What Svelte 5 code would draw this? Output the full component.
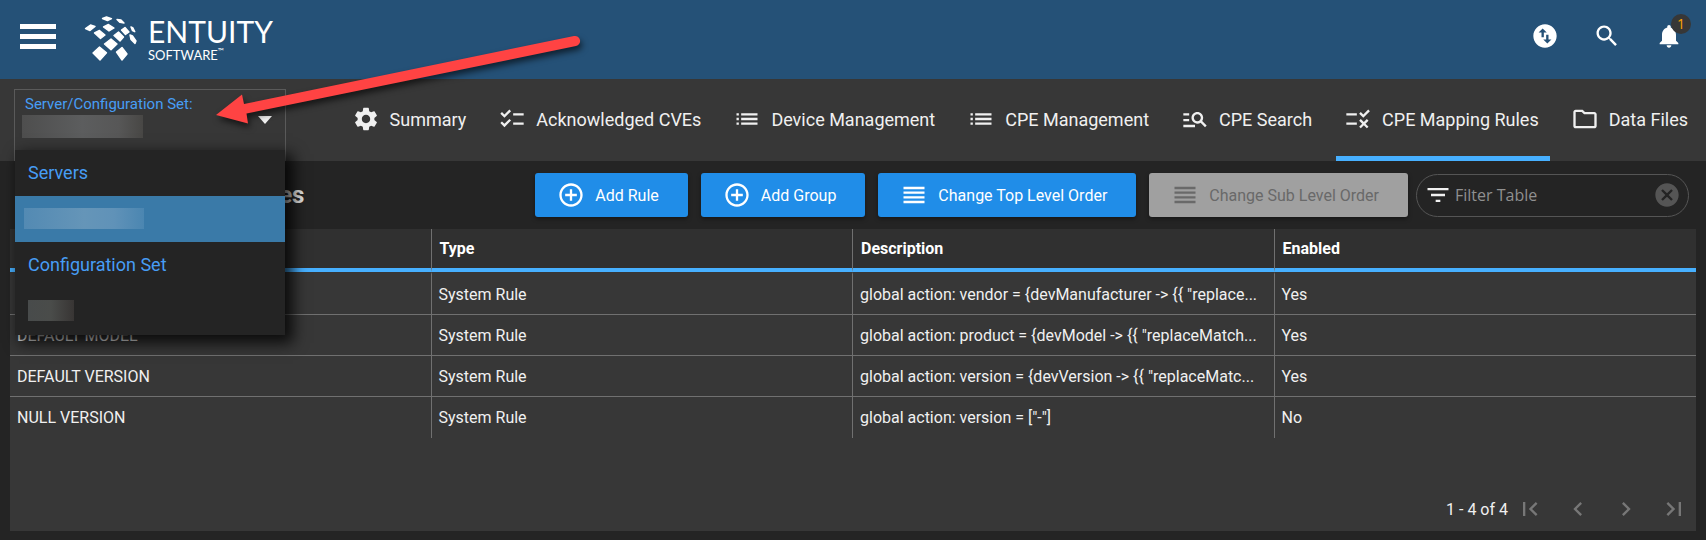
<script>
  const icons = {
    settings: 'M19.14 12.94c.04-.3.06-.61.06-.94 0-.32-.02-.64-.07-.94l2.03-1.58c.18-.14.23-.41.12-.61l-1.92-3.32c-.12-.22-.37-.29-.59-.22l-2.39.96c-.5-.38-1.03-.7-1.62-.94l-.36-2.54c-.04-.24-.24-.41-.48-.41h-3.84c-.24 0-.43.17-.47.41l-.36 2.54c-.59.24-1.13.57-1.62.94l-2.39-.96c-.22-.08-.47 0-.59.22L2.74 8.87c-.12.21-.08.47.12.61l2.03 1.58c-.05.3-.09.63-.09.94s.02.64.07.94l-2.03 1.58c-.18.14-.23.41-.12.61l1.92 3.32c.12.22.37.29.59.22l2.39-.96c.5.38 1.03.7 1.62.94l.36 2.54c.05.24.24.41.48.41h3.84c.24 0 .44-.17.47-.41l.36-2.54c.59-.24 1.13-.56 1.62-.94l2.39.96c.22.08.47 0 .59-.22l1.92-3.32c.12-.22.07-.47-.12-.61l-2.01-1.58zM12 15.6c-1.98 0-3.6-1.62-3.6-3.6s1.62-3.6 3.6-3.6 3.6 1.62 3.6 3.6-1.62 3.6-3.6 3.6z',
    checklist: 'M22 7h-9v2h9V7zm0 8h-9v2h9v-2zM5.54 11L2 7.46l1.41-1.41 2.12 2.12 4.24-4.24 1.41 1.41L5.54 11zm0 8L2 15.46l1.41-1.41 2.12 2.12 4.24-4.24 1.41 1.41L5.54 19z',
    list: 'M3 13h2v-2H3v2zm0 4h2v-2H3v2zm0-8h2V7H3v2zm4 4h14v-2H7v2zm0 4h14v-2H7v2zM7 7v2h14V7H7z',
    manageSearch: 'M7 9H2V7h5v2zm0 3H2v2h5v-2zm13.59 7l-3.83-3.83c-.8.52-1.74.83-2.76.83-2.76 0-5-2.24-5-5s2.24-5 5-5 5 2.24 5 5c0 1.02-.31 1.96-.83 2.75L22 17.59 20.59 19zM17 11c0-1.65-1.35-3-3-3s-3 1.35-3 3 1.35 3 3 3 3-1.35 3-3zM2 19h10v-2H2v2z',
    rule: 'M16.54 11L13 7.46l1.41-1.41 2.12 2.12 4.24-4.24 1.41 1.41L16.54 11zM11 7H2v2h9V7zm10 6.41L19.59 12 17 14.59 14.41 12 13 13.41 15.59 16 13 18.59 14.41 20 17 17.41 19.59 20 21 18.59 18.41 16 21 13.41zM11 15H2v2h9v-2z',
    folder: 'M9.17 6l2 2H20v10H4V6h5.17M10 4H4c-1.1 0-1.99.9-1.99 2L2 18c0 1.1.9 2 2 2h16c1.1 0 2-.9 2-2V8c0-1.1-.9-2-2-2h-8l-2-2z',
    add: 'M13 7h-2v4H7v2h4v4h2v-4h4v-2h-4V7zm-1-5C6.48 2 2 6.48 2 12s4.48 10 10 10 10-4.48 10-10S17.52 2 12 2zm0 18c-4.41 0-8-3.59-8-8s3.59-8 8-8 8 3.59 8 8-3.59 8-8 8z',
    reorder: 'M3 15h18v-2H3v2zm0 4h18v-2H3v2zm0-8h18V9H3v2zm0-6v2h18V5H3z',
    filter: 'M10 18h4v-2h-4v2zM3 6v2h18V6H3zm3 7h12v-2H6v2z',
    cancel: 'M12 2C6.47 2 2 6.47 2 12s4.47 10 10 10 10-4.47 10-10S17.53 2 12 2zm5 13.59L15.59 17 12 13.41 8.41 17 7 15.59 10.59 12 7 8.41 8.41 7 12 10.59 15.59 7 17 8.41 13.41 12 17 15.59z',
    swap: 'M12 2C6.48 2 2 6.48 2 12s4.48 10 10 10 10-4.48 10-10S17.52 2 12 2zM6.5 9L10 5.5 13.5 9H11v4H9V9H6.5zm11 6L14 18.5 10.5 15H13v-4h2v4h2.5z',
    search: 'M15.5 14h-.79l-.28-.27C15.41 12.59 16 11.11 16 9.5 16 5.91 13.09 3 9.5 3S3 5.91 3 9.5 5.91 16 9.5 16c1.61 0 3.09-.59 4.23-1.57l.27.28v.79l5 4.99L20.49 19l-4.99-5zm-6 0C7.01 14 5 11.99 5 9.5S7.01 5 9.5 5 14 7.01 14 9.5 11.99 14 9.5 14z',
    bell: 'M12 22c1.1 0 2-.9 2-2h-4c0 1.1.89 2 2 2zm6-6v-5c0-3.07-1.64-5.64-4.5-6.32V4c0-.83-.67-1.5-1.5-1.5s-1.5.67-1.5 1.5v.68C7.63 5.36 6 7.92 6 11v5l-2 2v1h16v-1l-2-2z',
    first: 'M18.41 16.59L13.82 12l4.59-4.59L17 6l-6 6 6 6zM6 6h2v12H6z',
    prev: 'M15.41 7.41L14 6l-6 6 6 6 1.41-1.41L10.83 12z',
    next: 'M10 6L8.59 7.41 13.17 12l-4.58 4.59L10 18l6-6z',
    last: 'M5.59 7.41L10.18 12l-4.59 4.59L7 18l6-6-6-6zM16 6h2v12h-2z'
  };

  const tabs = [
    { label: 'Summary', icon: 'settings' },
    { label: 'Acknowledged CVEs', icon: 'checklist' },
    { label: 'Device Management', icon: 'list' },
    { label: 'CPE Management', icon: 'list' },
    { label: 'CPE Search', icon: 'manageSearch' },
    { label: 'CPE Mapping Rules', icon: 'rule' },
    { label: 'Data Files', icon: 'folder' }
  ];

  const actions = [
    { label: 'Add Rule', icon: 'add' },
    { label: 'Add Group', icon: 'add' },
    { label: 'Change Top Level Order', icon: 'reorder' },
    { label: 'Change Sub Level Order', icon: 'reorder', disabled: true }
  ];

  const columns = ['', 'Type', 'Description', 'Enabled'];

  const rules = [
    ['', 'System Rule', 'global action: vendor = {devManufacturer -> {{ "replace...', 'Yes'],
    ['DEFAULT MODEL', 'System Rule', 'global action: product = {devModel -> {{ "replaceMatch...', 'Yes'],
    ['DEFAULT VERSION', 'System Rule', 'global action: version = {devVersion -> {{ "replaceMatc...', 'Yes'],
    ['NULL VERSION', 'System Rule', 'global action: version = ["-"]', 'No']
  ];

  let activeTab = $state('CPE Mapping Rules');
  let menuOpen = $state(true);
  let filterText = $state('');

  let visibleRules = $derived(
    rules.filter((r) => r.join(' ').toLowerCase().includes(filterText.toLowerCase()))
  );
</script>

{#snippet icon(name)}
  <svg class="icon" viewBox="0 0 24 24" aria-hidden="true"><path d={icons[name]} /></svg>
{/snippet}

<div class="page">
  <header class="topbar">
    <button class="burger" aria-label="Menu">
      <span></span><span></span><span></span>
    </button>
    <a class="brand" href="#home">
      <svg class="brand-mark" viewBox="0 0 54 48" aria-hidden="true">
        <g stroke-linejoin="round" stroke-width="1.4">
          <path d="M18.5 3.5 22.5 2l5 1.600-4 2z" />
          <path d="M33 4.500l4 .5 3 3-4-.6z" />
          <path d="M1.500 13.500l5-3.500 4.500 1.500-5 4z" />
          <path d="M19.500 12l5-2.500 5.500 3.500-5 3z" />
          <path d="M10.500 18l5-2.500 5.500 4.500-4.500 3.500z" />
          <path d="M37.500 15l3.500-2.500 4 4.500-3.500 2.500z" />
          <path d="M30 20.500l4.500-3.500 5 5-3.500 4z" />
          <path d="M47 12l2 1 1.800 3.700-2.300-1z" />
          <path d="M46 20l2.500 1 3.500 5-1 2.500-4-4z" />
          <path d="M20.500 29l6.500-5 6 5-6 5.800z" />
          <path d="M9 38l6.500-6 7 5.700L16 45z" />
          <path d="M32.500 37l5.500-4.500 5 6.500-5 6z" />
        </g>
      </svg>
      <span class="brand-text">
        <span class="brand-name">ENTUITY</span>
        <span class="brand-sub">SOFTWARE<small>™</small></span>
      </span>
    </a>
    <div class="top-actions">
      <button aria-label="Transfers">{@render icon('swap')}</button>
      <button aria-label="Search">{@render icon('search')}</button>
      <button aria-label="Notifications">
        {@render icon('bell')}
        <span class="badge">1</span>
      </button>
    </div>
  </header>

  <div class="navbar">
    <div class="server-select">
      <button
        class="select-box"
        aria-haspopup="listbox"
        aria-expanded={menuOpen}
        onclick={() => (menuOpen = !menuOpen)}
      >
        <span class="select-value">
          <span class="select-label">Server/Configuration Set:</span>
          <span class="masked masked-value"></span>
        </span>
        <span class="caret"></span>
      </button>
      {#if menuOpen}
        <ul class="menu" role="listbox" aria-label="Server/Configuration Set">
          <li class="menu-title" role="presentation">Servers</li>
          <li class="menu-item selected" role="option" aria-selected="true">
            <span class="masked masked-server"></span>
          </li>
          <li class="menu-title" role="presentation">Configuration Set</li>
          <li class="menu-item indented" role="option" aria-selected="false">
            <span class="masked masked-set"></span>
          </li>
        </ul>
      {/if}
    </div>

    <nav class="tabs">
      {#each tabs as tab}
        <a
          href="#{tab.icon}"
          class="tab"
          class:active={tab.label === activeTab}
          onclick={() => (activeTab = tab.label)}
        >
          {@render icon(tab.icon)}
          <span>{tab.label}</span>
        </a>
      {/each}
    </nav>
  </div>

  <main class="content">
    <div class="toolbar">
      <h1>CPE Mapping Rules</h1>
      <div class="actions">
        {#each actions as action}
          <button class="btn" disabled={action.disabled}>
            {@render icon(action.icon)}
            <span>{action.label}</span>
          </button>
        {/each}
      </div>
      <div class="filter">
        {@render icon('filter')}
        <input type="text" placeholder="Filter Table" aria-label="Filter Table" bind:value={filterText} />
        <button class="clear" aria-label="Clear" onclick={() => (filterText = '')}>
          {@render icon('cancel')}
        </button>
      </div>
    </div>

    <section class="panel">
      <table>
        <thead>
          <tr>
            {#each columns as column}
              <th scope="col">{column}</th>
            {/each}
          </tr>
        </thead>
        <tbody>
          {#each visibleRules as rule}
            <tr>
              {#each rule as cell}
                <td>{cell}</td>
              {/each}
            </tr>
          {/each}
        </tbody>
      </table>
      <footer class="pager">
        <span>1 - 4 of 4</span>
        <div class="pager-buttons">
          <button aria-label="First page" disabled>{@render icon('first')}</button>
          <button aria-label="Previous page" disabled>{@render icon('prev')}</button>
          <button aria-label="Next page" disabled>{@render icon('next')}</button>
          <button aria-label="Last page" disabled>{@render icon('last')}</button>
        </div>
      </footer>
    </section>
  </main>

  <!-- Callout arrow pointing at the server selector -->
  <svg class="callout" viewBox="0 0 380 100" aria-hidden="true">
    <path d="M6 85 32 64.500 34 74 364 6a5 5 0 0 1 2 10L36.500 83.500 38 93.500z" />
  </svg>
</div>

<style>
  :global(body) {
    margin: 0;
    background: #242424;
  }

  .page {
    position: relative;
    display: flex;
    flex-direction: column;
    min-height: 100vh;
    background: #242424;
    color: #f0f0f0;
    font-family: Roboto, sans-serif;
    font-size: 16px;
  }

  .page :global(*) {
    box-sizing: border-box;
  }

  button {
    display: flex;
    align-items: center;
    margin: 0;
    padding: 0;
    border: none;
    background: none;
    color: inherit;
    font: inherit;
    cursor: pointer;
  }

  .icon {
    display: block;
    flex: none;
    width: 28px;
    height: 28px;
    fill: currentColor;
  }

  /* Top bar */
  .topbar {
    display: flex;
    align-items: center;
    height: 79px;
    padding: 0 14px 0 20px;
    background: #255177;
    color: #fff;
  }

  .burger {
    flex-direction: column;
    gap: 5px;
    width: 36px;
    margin-right: 28px;
    padding-bottom: 7px;
  }

  .burger span {
    width: 100%;
    height: 5px;
    background: #fff;
  }

  .brand {
    display: flex;
    align-items: center;
    gap: 10px;
    color: #fff;
    text-decoration: none;
    font-family: Lato, sans-serif;
  }

  .brand-mark {
    width: 54px;
    height: 48px;
    margin-bottom: 2px;
    fill: #fff;
    stroke: #fff;
  }

  .brand-text {
    display: flex;
    flex-direction: column;
    padding-bottom: 2px;
  }

  .brand-name {
    font-size: 30px;
    line-height: 32px;
  }

  .brand-sub {
    font-size: 13px;
    line-height: 16px;
  }

  .brand-sub small {
    font-size: 8px;
    line-height: 8px;
    vertical-align: top;
  }

  .top-actions {
    display: flex;
    gap: 34px;
    margin-left: auto;
    padding: 0 9px 8px 0;
  }

  .top-actions button {
    position: relative;
  }

  .badge {
    position: absolute;
    top: -8px;
    right: -8px;
    width: 20px;
    height: 20px;
    border-radius: 50%;
    background: #373737;
    color: #ffa500;
    font-family: "Open Sans", sans-serif;
    font-size: 14px;
    line-height: 20px;
    text-align: center;
  }

  /* Navigation */
  .navbar {
    display: flex;
    justify-content: space-between;
    height: 82px;
    padding: 0 7px 0 14px;
    background: #373737;
  }

  .server-select {
    position: relative;
    width: 272px;
    padding-top: 10px;
  }

  .select-box {
    justify-content: space-between;
    align-items: flex-start;
    width: 100%;
    height: 72px;
    padding: 5px 13px 0 7px;
    border: 1px solid #5a5a5a;
    border-bottom: none;
    text-align: left;
  }

  .select-value {
    display: flex;
    flex-direction: column;
    gap: 1px;
  }

  .select-label {
    padding-left: 3px;
    color: #479df5;
    font-size: 15px;
    line-height: 19px;
  }

  .caret {
    margin-top: 21px;
    border: 7px solid transparent;
    border-top: 8px solid #f0f0f0;
    border-bottom: none;
  }

  .masked {
    display: block;
    height: 21px;
  }

  .masked-value {
    width: 121px;
    height: 23px;
    background: linear-gradient(90deg, #4e4e4e, #5c5d5e 50%, #575757 80%, #484745);
  }

  .masked-server {
    width: 120px;
    background: linear-gradient(90deg, #538ab3, #6595b8 50%, #6092b8 75%, #4b86b1);
  }

  .masked-set {
    width: 46px;
    background: linear-gradient(90deg, #484b4b, #4a4c4a 50%, #383534);
  }

  .menu {
    position: absolute;
    z-index: 2;
    top: 71px;
    left: 1px;
    right: 1px;
    margin: 0;
    padding: 0 0 1px;
    list-style: none;
    background: #242424;
    box-shadow: 6px 6px 14px 2px rgba(0, 0, 0, 0.8);
  }

  .menu-title,
  .menu-item {
    display: flex;
    align-items: center;
    height: 46px;
    padding: 0 9px 2px;
  }

  .menu-title {
    padding: 0 13px 1px;
    color: #479df5;
    font-size: 18px;
  }

  .menu-item.indented {
    padding: 0 13px 2px;
  }

  .menu-item.selected {
    background: #3a7aa8;
  }

  .tabs {
    display: flex;
    gap: 13px;
  }

  .tab {
    display: flex;
    align-items: center;
    gap: 10px;
    padding: 3px 11px 0 8px;
    border-bottom: 5px solid transparent;
    color: #f0f0f0;
    font-size: 18px;
    text-decoration: none;
    white-space: nowrap;
  }

  .tab.active {
    border-bottom-color: #47b0ff;
  }

  /* Toolbar */
  .content {
    display: flex;
    flex: 1;
    flex-direction: column;
    padding: 0 10px 9px;
  }

  .toolbar {
    display: flex;
    align-items: center;
    height: 68px;
    padding-right: 7px;
  }

  h1 {
    margin: 0;
    padding-left: 83px;
    color: #e0e0e0;
    font-size: 24px;
    font-weight: 700;
    white-space: nowrap;
  }

  .actions {
    display: flex;
    gap: 13px;
    margin-left: auto;
  }

  .btn {
    gap: 10px;
    height: 44px;
    padding: 0 29px 0 22px;
    border-radius: 3px;
    background: #208de8;
    color: #fff;
    white-space: nowrap;
    box-shadow: 0 2px 4px rgba(0, 0, 0, 0.4);
  }

  .btn:disabled {
    background: #a0a0a0;
    color: #696969;
    cursor: default;
  }

  .filter {
    display: flex;
    align-items: center;
    width: 273px;
    height: 43px;
    margin-left: 8px;
    padding: 0 7px;
    border: 1px solid #555;
    border-radius: 22px;
  }

  .filter input {
    flex: 1;
    min-width: 0;
    padding: 0 3px 1px;
    border: none;
    outline: none;
    background: none;
    color: #f0f0f0;
    font-family: "Open Sans", sans-serif;
    font-size: 16px;
  }

  .filter input::placeholder {
    color: #909090;
    opacity: 1;
  }

  .clear {
    color: #555;
  }

  /* Table */
  .panel {
    display: flex;
    flex: 1;
    flex-direction: column;
    background: #373737;
  }

  table {
    width: 100%;
    table-layout: fixed;
    border-collapse: separate;
    border-spacing: 0;
  }

  th,
  td {
    overflow: hidden;
    border-right: 1px solid #707070;
    text-align: left;
    text-overflow: ellipsis;
    white-space: nowrap;
  }

  th:last-child,
  td:last-child {
    border-right: none;
  }

  th {
    height: 43px;
    padding: 0 8px;
    border-bottom: 4px solid #47b0ff;
    background: #303030;
    color: #fff;
    font-weight: 700;
  }

  td {
    height: 41px;
    padding: 0 7px;
    border-bottom: 1px solid #707070;
  }

  tbody tr:first-child td {
    height: 43px;
    border-top: 2px solid transparent;
  }

  tbody tr:last-child td {
    border-bottom: none;
  }

  .pager {
    display: flex;
    justify-content: flex-end;
    align-items: center;
    gap: 8px;
    margin-top: auto;
    padding: 0 8px 8px;
  }

  .pager-buttons {
    display: flex;
    gap: 20px;
  }

  .pager-buttons button {
    color: #777;
  }

  .callout {
    position: absolute;
    z-index: 3;
    top: 30px;
    left: 210px;
    width: 380px;
    height: 100px;
    overflow: visible;
    fill: #ff4343;
    filter: drop-shadow(2px 4px 3px rgba(0, 0, 0, 0.6));
    pointer-events: none;
  }
</style>
